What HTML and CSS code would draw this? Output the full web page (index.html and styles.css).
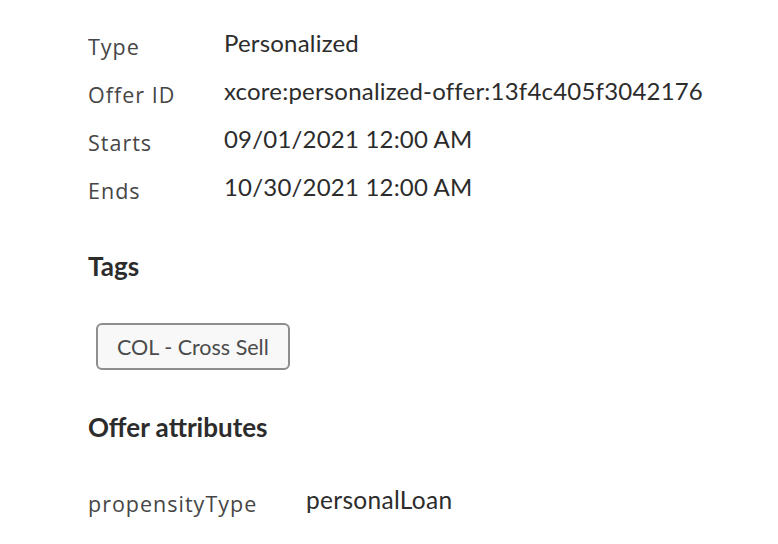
FILE: index.html
```html
<!DOCTYPE html>
<html>
<head>
<meta charset="utf-8">
<link rel="stylesheet" href="styles.css">
</head>
<body>
<div class="panel">
  <dl class="props">
    <div class="row"><dt>Type</dt><dd>Personalized</dd></div>
    <div class="row"><dt>Offer ID</dt><dd>xcore:personalized-offer:13f4c405f3042176</dd></div>
    <div class="row"><dt>Starts</dt><dd>09/01/2021 12:00 AM</dd></div>
    <div class="row"><dt>Ends</dt><dd>10/30/2021 12:00 AM</dd></div>
  </dl>
  <h2 class="heading">Tags</h2>
  <div class="tags"><span class="tag">COL - Cross Sell</span></div>
  <h2 class="heading">Offer attributes</h2>
  <div class="attrs">
    <span class="attr-key">propensityType</span>
    <span class="attr-val">personalLoan</span>
  </div>
</div>
</body>
</html>
```
FILE: styles.css
```css
html, body {
  margin: 0;
  padding: 0;
  background: #ffffff;
}
body {
  font-family: "Lato", "Open Sans", sans-serif;
  color: #2c2c2c;
}
.panel {
  padding: 18px 0 0 88px;
}
.props {
  margin: 0;
  display: flex;
  flex-direction: column;
}
.row {
  display: grid;
  grid-template-columns: 136px auto;
  height: 48px;
  align-items: center;
}
.row dt {
  font-family: "Open Sans", sans-serif;
  font-size: 21.5px;
  letter-spacing: 1px;
  color: #464646;
  padding-top: 8px;
}
.row dd {
  margin: 0;
  font-size: 24px;
  letter-spacing: 0.2px;
  color: #2c2c2c;
}
.heading {
  margin: 0;
  font-size: 26px;
  font-weight: 700;
  color: #2c2c2c;
}
.props + .heading {
  margin-top: 40px;
}
.tags {
  padding: 41px 0 0 8px;
  height: 48px;
}
.tag {
  display: inline-flex;
  align-items: center;
  box-sizing: border-box;
  height: 47px;
  padding: 0 19px;
  border: 2px solid #8e8e8e;
  border-radius: 6px;
  background: #f8f8f8;
  font-size: 21.5px;
  color: #4b4b4b;
}
.tags + .heading {
  margin-top: 40px;
}
.attrs {
  display: flex;
  align-items: center;
  margin-top: 38px;
}
.attr-key {
  font-family: "Open Sans", sans-serif;
  font-size: 21.5px;
  letter-spacing: 1px;
  color: #464646;
  width: 218px;
  padding-top: 8px;
}
.attr-val {
  font-size: 24.5px;
  letter-spacing: 0.3px;
  color: #2c2c2c;
}
```
